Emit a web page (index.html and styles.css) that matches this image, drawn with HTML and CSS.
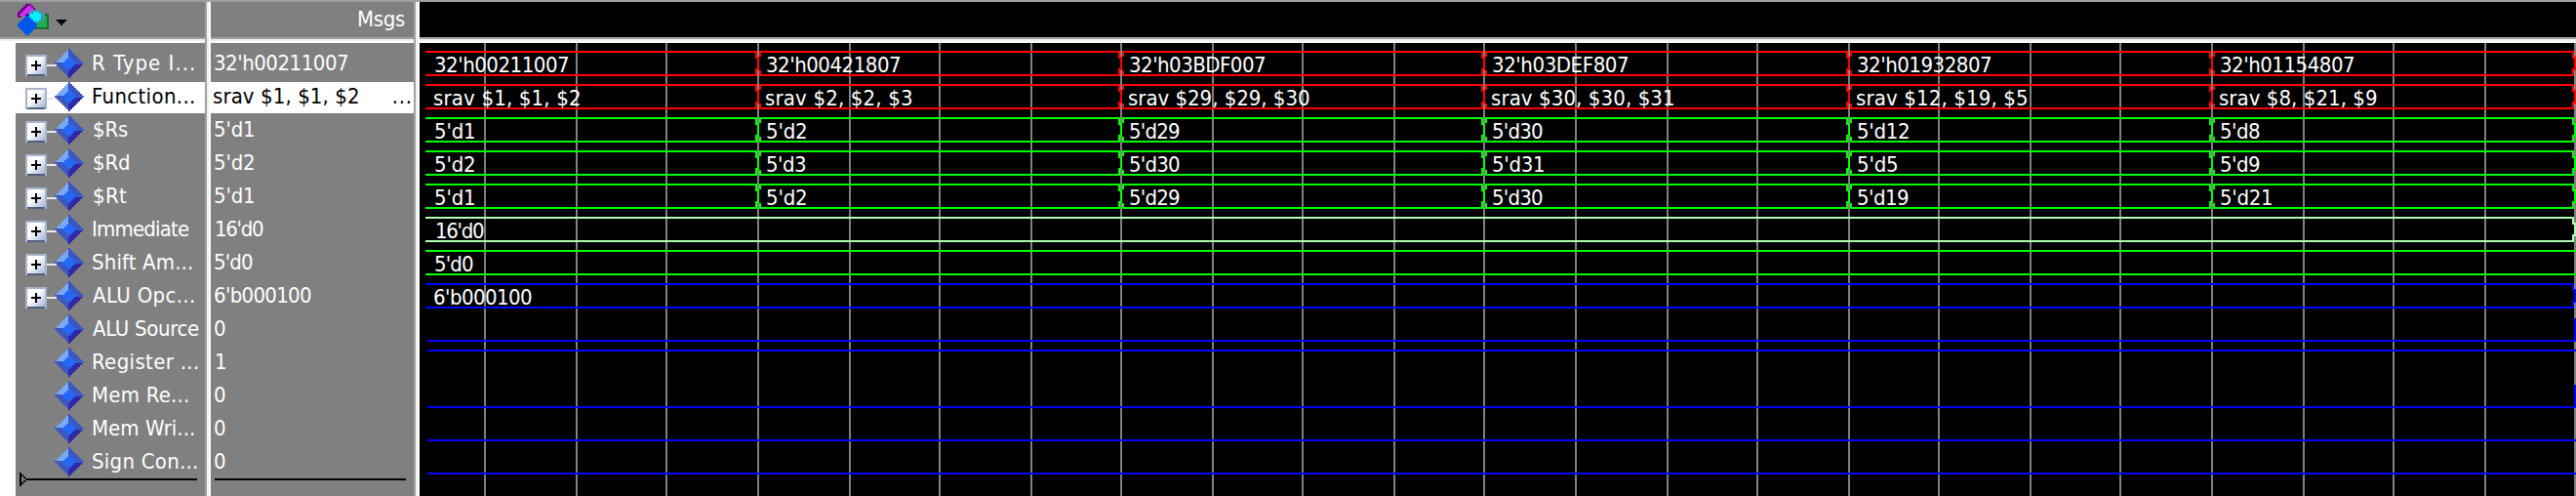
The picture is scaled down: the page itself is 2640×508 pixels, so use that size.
FILE: index.html
```html
<!DOCTYPE html>
<html lang="en">
<head>
<meta charset="utf-8">
<title>Wave</title>
<link rel="stylesheet" href="styles.css">
</head>
<body>
<div class="window">
  <section class="pane names">
    <header class="head">
      <svg class="shapes" width="54" height="36" viewBox="16 2 54 36">
        <path d="M28 4h4v2h2v2h2v2h2v4h-8v2h-8v2h-4v-6h2v-2h2v-2h2v-2h2v-2h2z" fill="#780088"/>
        <path d="M28 6h4v2h2v4h-4v2h-4v2h-6v-2h2v-2h2v-2h2v-2h2z" fill="#cc33f0"/>
        <path d="M36 14h14v16h-14z" fill="#1c6c34"/>
        <path d="M36 16h12v12h-12z" fill="#1cb048"/>
        <path d="M32 10h8v2h4v2h2v6h-2v2h-4v2h-8v-2h-2v-10h2z" fill="#4c94ac"/>
        <path d="M34 12h6v2h2v6h-2v2h-8v-2h-2v-6h4z" fill="#00f0ff"/>
        <path d="M26 16h4v2h2v2h2v2h2v2h2v4h-2v2h-2v2h-2v2h-2v2h-4v-2h-2v-2h-2v-2h-2v-2h-2v-4h2v-2h2v-2h2v-2h2z" fill="#0054e8"/>
        <path d="M58 20h10v2h-2v2h-2v2h-2v-2h-2v-2h-2z" fill="#000"/>
      </svg>
    </header>
    <div class="list" id="names"></div>
  </section>
  <div class="divider"></div>
  <section class="pane values">
    <header class="head"><span class="t" data-x="151" data-w="48">Msgs</span></header>
    <div class="list" id="values"></div>
  </section>
  <div class="divider"></div>
  <section class="pane waves">
    <header class="head"></header>
    <div id="wave"></div>
  </section>
</div>
<script src="main.js"></script>
</body>
</html>
```
FILE: styles.css
```css
* { box-sizing: border-box; }
body {
  margin: 0;
  background: #000;
  overflow: hidden;
  font: 22px/30px "DejaVu Sans Condensed", "DejaVu Sans", sans-serif;
  font-stretch: condensed;
}
.window {
  display: flex;
  width: 2640px;
  height: 508px;
  border-top: 2px solid #a0a0a0;
}
.pane { display: flex; flex-direction: column; overflow: hidden; }
.names { width: 210px; background: #fff; }
.values { width: 208px; }
.waves { width: 2210px; background: #000; }
.divider {
  width: 6px;
  border-left: 2px solid #a0a0a0;
  border-right: 2px solid #fff;
  background: #f0f0f0;
}
.head {
  height: 42px;
  flex: none;
  background: #808080;
  color: #fff;
  padding-top: 3px;
  border-bottom: 2px solid #fff;
  box-shadow: inset 0 -2px #f0f0f0, inset 0 -4px #a0a0a0;
}
.names .head { padding: 0 0 0 16px; }
.waves .head { background: #000; }
.shapes { display: block; }
.list { background: #808080; flex: 1; padding-top: 6px; color: #fff; }
.names .list { margin-left: 16px; }
.row { display: flex; height: 32px; margin-bottom: 2px; white-space: pre; }
.row.selected { background: #fff; color: #000; }
.t { display: inline-block; }
.tree { flex: none; width: 70px; height: 30px; display: block; }
.end { display: block; margin-top: -8px; }
svg { shape-rendering: crispEdges; }
#wave svg { display: block; }
#wave text { fill: #fff; }
```
FILE: main.js
```js
const FONT = '22px "DejaVu Sans Condensed", "DejaVu Sans", sans-serif';
const ctx = document.createElement('canvas').getContext('2d');
ctx.font = FONT;

// Letter spacing and origin that put a text's ink at x with width w.
function fit(text, x, w) {
  const m = ctx.measureText(text);
  const ink = m.actualBoundingBoxLeft + m.actualBoundingBoxRight;
  const spacing = text.length > 1 ? (w - ink) / (text.length - 1) : 0;
  return { x: x + m.actualBoundingBoxLeft, spacing };
}

// name, ink x, ink width, value, ink x, ink width
const signals = [
  ['R Type I...', 9, 104, "32'h00211007", 4, 136],
  ['Function...', 9, 104, 'srav $1, $1, $2', 3, 148],
  ['$Rs', 10, 35, "5'd1", 4, 40],
  ['$Rd', 10, 36, "5'd2", 4, 40],
  ['$Rt', 10, 34, "5'd1", 4, 40],
  ['Immediate', 9, 99, "16'd0", 6, 48],
  ['Shift Am...', 9, 102, "5'd0", 4, 39],
  ['ALU Opc...', 9, 104, "6'b000100", 4, 99],
  ['ALU Source', 9, 109, '0', 4, 12],
  ['Register ...', 9, 108, '1', 6, 10],
  ['Mem Re...', 9, 98, '0', 4, 12],
  ['Mem Wri...', 9, 104, '0', 4, 12],
  ['Sign Con...', 9, 107, '0', 4, 12]
];

function gem() {
  let s = '';
  for (let y = -7; y <= 7; y++) for (let x = -7; x <= 7; x++) {
    const d = Math.abs(x) + Math.abs(y);
    if (d > 7) continue;
    let c;
    if (d <= 3) c = '#2468f8';
    else if (x < 0 && y < 0) c = '#78a8f8';
    else if (x >= 0 && y > 0) c = '#3028a4';
    else c = '#3c58c0';
    s += `<rect x="${54 + x * 2}" y="${14 + y * 2}" width="2" height="2" fill="${c}"/>`;
  }
  return s;
}
const GEM = gem();
const PLUS = `<defs><linearGradient id="g" x1="0" y1="0" x2="1" y2="1"><stop offset=".4" stop-color="#fff"/><stop offset="1" stop-color="#a4b4d8"/></linearGradient></defs>
<rect x="30" y="16" width="12" height="2" fill="#e8e8e8"/>
<rect x="10" y="6" width="22" height="22" fill="#a8b4cc"/><rect x="12" y="26" width="18" height="2" fill="#50607c"/>
<rect x="12" y="8" width="18" height="18" fill="url(#g)"/>
<path d="M16 16h10v2h-10zM20 12h2v10h-2z" fill="#000"/>`;

const span = (t, x, w) => `<span class="t" data-x="${x}" data-w="${w}">${t}</span>`;
const names = document.getElementById('names');
const values = document.getElementById('values');
signals.forEach(([n, nx, nw, v, vx, vw], i) => {
  const sel = i === 1 ? ' selected' : '';
  names.innerHTML += `<div class="row${sel}"><svg class="tree" viewBox="0 0 70 30">${i < 8 ? PLUS : ''}${GEM}</svg>${span(n, nx, nw)}</div>`;
  values.innerHTML += `<div class="row${sel}">${span(v, vx, vw)}${i === 1 ? span('...', 35, 17) : ''}</div>`;
});
names.innerHTML += `<svg class="end" width="194" height="14"><path d="M10 6h176v2h-176zM4 0h2v14h-2zM6 2h2v2h-2zM8 4h2v2h-2zM8 8h2v2h-2zM6 10h2v2h-2z" fill="#000"/></svg>`;
values.innerHTML += `<svg class="end" width="208" height="14"><path d="M4 6h196v2h-196z" fill="#000"/></svg>`;
document.querySelectorAll('.t').forEach(e => {
  const f = fit(e.textContent, +e.dataset.x, +e.dataset.w);
  e.style.marginLeft = f.x + 'px';
  e.style.letterSpacing = f.spacing + 'px';
});

// Waveform area
const grid = [496, 590, 682, 776, 870, 962, 1056, 1148, 1242, 1334, 1428, 1520, 1614, 1708, 1800, 1894, 1986, 2080, 2172, 2266, 2360, 2452, 2546, 2638];
const edges = [776, 1148, 1520, 1894, 2266, 2638];
const R = '#f00', G = '#0f0', B = '#00f', P = '#b0ffb0';
const buses = [
  [R, [["32'h00211007", 136], ["32'h00421807", 136], ["32'h03BDF007", 138], ["32'h03DEF807", 138], ["32'h01932807", 136], ["32'h01154807", 136]]],
  [R, [['srav $1, $1, $2', 149], ['srav $2, $2, $3', 150], ['srav $29, $29, $30', 185], ['srav $30, $30, $31', 186], ['srav $12, $19, $5', 174], ['srav $8, $21, $9', 161]]],
  [G, [["5'd1", 40], ["5'd2", 40], ["5'd29", 51], ["5'd30", 51], ["5'd12", 52], ["5'd8", 40]]],
  [G, [["5'd2", 40], ["5'd3", 40], ["5'd30", 51], ["5'd31", 52], ["5'd5", 40], ["5'd9", 40]]],
  [G, [["5'd1", 40], ["5'd2", 40], ["5'd29", 51], ["5'd30", 51], ["5'd19", 52], ["5'd21", 52]]],
  [P, [["16'd0", 48]]],
  [G, [["5'd0", 39]]],
  [B, [["6'b000100", 100]]]
];
let out = '';
const rect = (x, y, w, h, c) => { out += `<rect x="${x}" y="${y}" width="${w}" height="${h}" fill="${c}"/>`; };
grid.forEach(x => rect(x, 44, 2, 464, '#808080'));
buses.forEach(([c, segs], i) => {
  const y = 52 + 34 * i;
  const marks = i < 5 ? edges : i === 6 ? [] : [2638];
  rect(436, y, 2204, 2, c);
  rect(436, y + 24, 2204, 2, c);
  marks.forEach(x => {
    rect(x - 2, y, 2, 8, c); rect(x - 2, y + 18, 2, 8, c);
    rect(x + 2, y, 2, 6, c); rect(x + 2, y + 20, 2, 6, c);
    rect(x, y, 2, 26, '#808080');
    rect(x, y + 6, 2, 14, c);
  });
  segs.forEach(([t, w], k) => {
    const start = k ? edges[k - 1] : 436;
    const dx = t[0] === 's' || t[0] === '6' ? 9 : t[0] === '1' ? 12 : 10;
    const f = fit(t, start + dx, w);
    out += `<text x="${f.x}" y="${y + 22}" style="letter-spacing:${f.spacing}px">${t}</text>`;
  });
});
[348, 358, 416, 450, 484].forEach(y => rect(438, y, 2202, 2, B));
rect(2638, 326, 2, 24, B);
rect(2638, 394, 2, 24, B);
document.getElementById('wave').innerHTML = `<svg width="2210" height="464" viewBox="430 44 2210 464">${out}</svg>`;
```
